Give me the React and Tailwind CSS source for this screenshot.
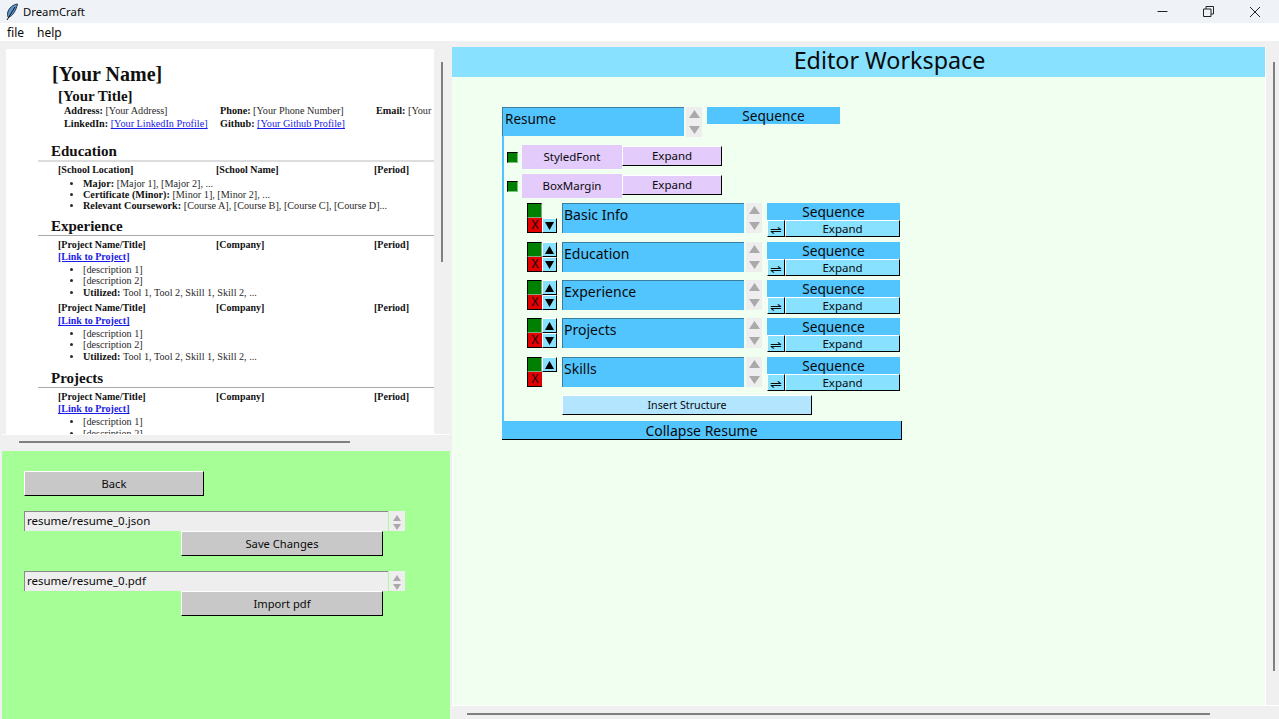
import React from "react";

const ui = "font-['Noto_Sans',sans-serif] text-[#0a0a0a]";

function Tri({ dir = "up", color = "#000", w = 11, h = 8 }) {
  return (
    <svg width={w} height={h} viewBox="0 0 10 8" preserveAspectRatio="none" className="block">
      <path d={dir === "up" ? "M5 0 L10 8 L0 8 Z" : "M0 0 L10 0 L5 8 Z"} fill={color} />
    </svg>
  );
}

function Spinner({ className = "", w = 11, h = 8 }) {
  return (
    <div className={`flex flex-col items-center justify-between bg-[#eeeeee] ${className}`}>
      <Tri dir="up" color="#aaaaaa" w={w} h={h} />
      <Tri dir="down" color="#aaaaaa" w={w} h={h} />
    </div>
  );
}

function Raised({ children, className = "" }) {
  return (
    <div className={`flex items-center justify-center border-t border-l border-t-white border-l-white border-b border-r border-b-black border-r-black ${className}`}>
      {children}
    </div>
  );
}

function PathField({ value }) {
  return (
    <div className="flex h-[20px] w-[381px]">
      <div className="flex w-[364px] items-center border-t border-l border-t-[#8a8a8a] border-l-[#8a8a8a] bg-[#eeeeee] pb-[1px] pl-[2px] text-[11.5px] leading-none">
        {value}
      </div>
      <Spinner className="ml-[1px] w-[16px] pb-[1px] pt-[4px]" w={8} h={6} />
    </div>
  );
}

function ArrowBtn({ dir }) {
  return (
    <div className="flex items-center justify-center border-r border-b border-r-black border-b-black border-t border-l border-t-white border-l-white bg-[#87e1ff]">
      <Tri dir={dir} w={9} h={8} />
    </div>
  );
}

function Section({ name, up, down, className = "" }) {
  return (
    <div className={`flex h-[34px] items-start ${className}`}>
      <div className="ml-[23px] grid grid-cols-[15px_15px] grid-rows-[15px_15px]">
        <div className="border-t border-l border-t-black border-l-black border-b border-r border-b-[#7fa97f] border-r-[#7fa97f] bg-[#008000]" />
        {up ? <ArrowBtn dir="up" /> : <div />}
        <div className="flex items-center justify-center border-b border-l border-b-black border-l-black bg-[#e00000] text-[12px] leading-none">X</div>
        {down ? <ArrowBtn dir="down" /> : <div />}
      </div>
      <div className="ml-[5px] flex h-[30px] w-[182px] items-start border-t border-l border-t-[#3a7fa0] border-l-[#3a7fa0] bg-[#52c5ff] pl-[1px] pt-[1px] text-[14px] leading-[20px]">
        {name}
      </div>
      <Spinner className="ml-[2px] h-[30px] w-[16px] py-[3px]" />
      <div className="ml-[5px] w-[133px]">
        <div className="flex h-[17px] items-center justify-center bg-[#52c5ff] pt-[1px] text-[13.7px] leading-none">Sequence</div>
        <div className="flex h-[17px]">
          <Raised className="w-[18px] bg-[#87e1ff] pt-[3px] text-[14px] leading-none">⇌</Raised>
          <Raised className="flex-1 bg-[#87e1ff] text-[11.5px] leading-none">Expand</Raised>
        </div>
      </div>
    </div>
  );
}

function Attr({ name, className = "" }) {
  return (
    <div className={`flex h-[24px] items-start ${className}`}>
      <div className="ml-[3px] mt-[7px] size-[11px] border-t border-l border-t-black border-l-black border-b border-r border-b-[#7fc07f] border-r-[#7fc07f] bg-[#008000]" />
      <div className="ml-[4px] flex h-[24px] w-[100px] items-center justify-center bg-[#e3cbfb] text-[11.5px] leading-none">{name}</div>
      <Raised className="mt-[1px] h-[20px] w-[100px] bg-[#e3cbfb] text-[11.5px] leading-none">Expand</Raised>
    </div>
  );
}

function Row3({ a, b, c, className = "" }) {
  return (
    <div className={`ml-[52px] grid h-[12px] grid-cols-[158px_158px_60px] text-[10px] font-bold leading-[12px] text-[#111] ${className}`}>
      <span>{a}</span><span>{b}</span><span>{c}</span>
    </div>
  );
}

function Bullets({ items, className = "" }) {
  return (
    <ul className={`ml-[77px] list-disc text-[10.2px] leading-[11.4px] text-[#2a2a2a] ${className}`}>
      {items.map((it, i) => (
        <li key={i} className="whitespace-nowrap">
          {it[0] && <b className="text-[#111]">{it[0]} </b>}{it[1]}
        </li>
      ))}
    </ul>
  );
}

function Heading({ children, className = "", rule = "h-[1px] bg-[#aaaaaa]" }) {
  return (
    <div className={className}>
      <div className="ml-[45px] h-[17px] text-[15px] font-bold leading-[17px] text-[#111]">{children}</div>
      <div className={`ml-[32px] ${rule}`} />
    </div>
  );
}

const Link = ({ className = "" }) => (
  <div className={`ml-[52px] h-[12px] text-[10px] font-bold leading-[12px] text-[#1a1ae6] underline ${className}`}>[Link to Project]</div>
);

const projectItems = [
  ["", "[description 1]"],
  ["", "[description 2]"],
  ["Utilized:", "Tool 1, Tool 2, Skill 1, Skill 2, ..."],
];

function Resume() {
  return (
    <div className="mt-[8px] h-[385px] w-[428px] overflow-hidden bg-white font-['Liberation_Serif',serif]">
      <div className="ml-[46px] mt-[13px] h-[24px] whitespace-nowrap text-[20px] font-bold leading-[24px] text-[#111]">[Your Name]</div>
      <div className="ml-[52px] h-[19px] whitespace-nowrap text-[15px] font-bold leading-[20px] text-[#111]">[Your Title]</div>
      <div className="ml-[58px] grid w-[370px] grid-cols-[156px_156px_58px] whitespace-nowrap text-[10.2px] text-[#2a2a2a]">
        <span className="h-[12px] leading-[12px]"><b className="text-[#111]">Address:</b> [Your Address]</span>
        <span className="h-[12px] leading-[12px]"><b className="text-[#111]">Phone:</b> [Your Phone Number]</span>
        <span className="h-[12px] leading-[12px]"><b className="text-[#111]">Email:</b> [Your</span>
        <span className="h-[13px] leading-[13px]"><b className="text-[#111]">LinkedIn:</b> <a className="text-[#1a1ae6] underline">[Your LinkedIn Profile]</a></span>
        <span className="h-[13px] leading-[13px]"><b className="text-[#111]">Github:</b> <a className="text-[#1a1ae6] underline">[Your Github Profile]</a></span>
      </div>
      <Heading className="mt-[13px]" rule="h-[2px] bg-[#dddddd]">Education</Heading>
      <Row3 className="mt-[2px]" a="[School Location]" b="[School Name]" c="[Period]" />
      <Bullets className="mt-[1.5px]" items={[
        ["Major:", "[Major 1], [Major 2], ..."],
        ["Certificate (Minor):", "[Minor 1], [Minor 2], ..."],
        ["Relevant Coursework:", "[Course A], [Course B], [Course C], [Course D]..."],
      ]} />
      <Heading className="mt-[6px]">Experience</Heading>
      <Row3 className="mt-[3px]" a="[Project Name/Title]" b="[Company]" c="[Period]" />
      <Link />
      <Bullets className="mt-[1px]" items={projectItems} />
      <Row3 className="mt-[4px]" a="[Project Name/Title]" b="[Company]" c="[Period]" />
      <Link className="mt-[1px]" />
      <Bullets className="mt-[1px]" items={projectItems} />
      <Heading className="mt-[8px]">Projects</Heading>
      <Row3 className="mt-[3px]" a="[Project Name/Title]" b="[Company]" c="[Period]" />
      <Link />
      <Bullets className="mt-[1px]" items={projectItems.slice(0, 2)} />
    </div>
  );
}

function Feather() {
  return (
    <svg width="14" height="18" viewBox="0 0 14 18" className="ml-[5px] shrink-0">
      <path d="M12.5 1 C8 1.5 3.5 5 2.6 10 C2.3 12 2.6 13.5 3.3 14.5 C7.5 13 11 8 12.5 1 Z" fill="#5b93cf" stroke="#1b2a3a" strokeWidth="0.9" />
      <path d="M10 4 L2 17" stroke="#111" strokeWidth="1" fill="none" />
    </svg>
  );
}

export default function App() {
  return (
    <div className={`flex h-[719px] w-[1279px] flex-col overflow-hidden bg-[#f0f0f0] ${ui}`}>
      {/* title bar */}
      <div className="flex h-[23px] items-center bg-[#eff3f7]">
        <Feather />
        <span className="ml-[4px] text-[11.3px] leading-none">DreamCraft</span>
        <div className="ml-auto flex items-center">
          <svg width="11" height="11" viewBox="0 0 11 11" className="mr-[35px]"><path d="M0.5 5.5 H10.5" stroke="#222" /></svg>
          <svg width="11" height="11" viewBox="0 0 11 11" className="mr-[35px]">
            <path d="M0.5 3 H8 V10.5 H0.5 Z M3 3 V0.5 H10.5 V8 H8" fill="none" stroke="#222" />
          </svg>
          <svg width="12" height="12" viewBox="0 0 12 12" className="mr-[18px]"><path d="M1 1 L11 11 M11 1 L1 11" stroke="#222" /></svg>
        </div>
      </div>
      {/* menu */}
      <div className="flex h-[18px] items-center gap-[13px] bg-white pl-[7px] pt-[2px] text-[12px] leading-none">
        <span>file</span>
        <span>help</span>
      </div>
      {/* body */}
      <div className="flex h-[678px]">
        {/* left column */}
        <div className="flex w-[450px] flex-col">
          <div className="flex h-[393px]">
            <div className="ml-[6px]"><Resume /></div>
            <div className="w-[16px] pl-[7px] pt-[21px]">
              <div className="h-[200px] w-[2px] bg-[#808080]" />
            </div>
          </div>
          <div className="ml-[2px] h-[17px] border-t border-t-white pl-[17px] pt-[6px]">
            <div className="h-[2px] w-[331px] bg-[#808080]" />
          </div>
          <div className="ml-[2px] flex-1 bg-[#a6ff96] pl-[22px] pt-[20px]">
            <Raised className="h-[25px] w-[180px] bg-[#c8c8c8] text-[11.2px] leading-none">Back</Raised>
            <div className="mt-[15px]"><PathField value="resume/resume_0.json" /></div>
            <Raised className="ml-[157px] h-[25px] w-[202px] bg-[#c8c8c8] pt-[1px] text-[11.2px] leading-none">Save Changes</Raised>
            <div className="mt-[15px]"><PathField value="resume/resume_0.pdf" /></div>
            <Raised className="ml-[157px] h-[25px] w-[202px] bg-[#c8c8c8] text-[11.2px] leading-none">Import pdf</Raised>
          </div>
        </div>
        {/* right column */}
        <div className="ml-[2px] flex w-[827px] flex-col pt-[6px]">
          <div className="flex h-[658px]">
            <div className="flex w-[814px] flex-col border-r border-r-white">
              <div className="flex h-[30px] items-center justify-center bg-[#87e1ff] pb-[3px] pl-[62px] text-[23.3px] leading-none">Editor Workspace</div>
              <div className="flex-1 bg-[#f0fff0] pl-[50px] pt-[30px]">
                <div className="w-[400px]">
                  <div className="flex h-[30px] items-start">
                    <div className="flex h-[29px] w-[182px] items-start border-t border-l border-t-[#3a7fa0] border-l-[#3a7fa0] bg-[#52c5ff] pl-[2px] pt-[1px] text-[13.5px] leading-[20px]">Resume</div>
                    <Spinner className="ml-[2px] h-[30px] w-[16px] py-[3px]" />
                    <div className="ml-[5px] flex h-[17px] w-[133px] items-center justify-center bg-[#52c5ff] pt-[1px] text-[13.7px] leading-none">Sequence</div>
                  </div>
                  <div className="-mt-[1px] h-[285px] border-l-2 border-l-[#52c5ff] pt-[9px]">
                    <Attr name="StyledFont" />
                    <Attr name="BoxMargin" className="mt-[5px]" />
                    <Section name="Basic Info" down className="mt-[5px]" />
                    <Section name="Education" up down className="mt-[5px]" />
                    <Section name="Experience" up down className="mt-[4px]" />
                    <Section name="Projects" up down className="mt-[4px]" />
                    <Section name="Skills" up className="mt-[5px]" />
                    <Raised className="ml-[58px] mt-[4px] h-[20px] w-[250px] bg-[#b3e5ff] text-[10.7px] leading-none">Insert Structure</Raised>
                  </div>
                  <div className="flex h-[19px] items-center justify-center border-b border-r border-b-black border-r-black bg-[#52c5ff] pt-[2px] text-[14px] leading-none">Collapse Resume</div>
                </div>
              </div>
            </div>
            <div className="w-[13px] pl-[7px] pt-[15px]">
              <div className="h-[609px] w-[2px] bg-[#808080]" />
            </div>
          </div>
          <div className="h-[14px] border-t border-t-white pl-[15px] pt-[7px]">
            <div className="h-[2px] w-[743px] bg-[#808080]" />
          </div>
        </div>
      </div>
    </div>
  );
}
